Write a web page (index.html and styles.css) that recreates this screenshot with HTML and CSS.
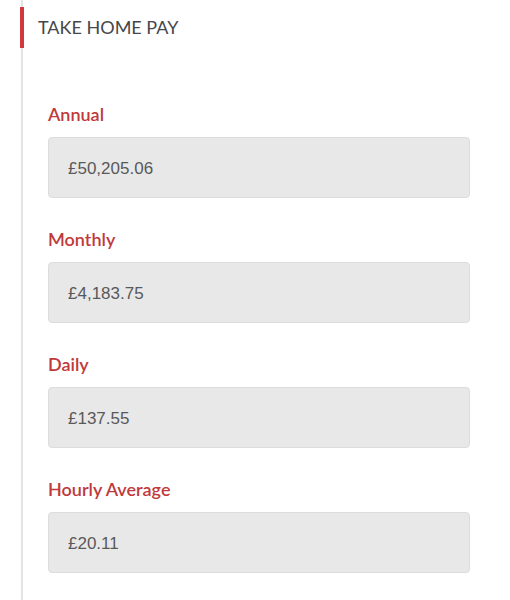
FILE: index.html
```html
<!DOCTYPE html>
<html lang="en">
<head>
    <meta charset="UTF-8">
    <meta name="viewport" content="width=device-width, initial-scale=1.0">
    <title>Take Home Pay</title>
    <link rel="stylesheet" href="styles.css">
</head>
<body>
    <section class="panel">
        <h2 class="panel-title">TAKE HOME PAY</h2>

        <div class="fields">
            <div class="field">
                <label for="annual">Annual</label>
                <div class="value" id="annual">£50,205.06</div>
            </div>
            <div class="field">
                <label for="monthly">Monthly</label>
                <div class="value" id="monthly">£4,183.75</div>
            </div>
            <div class="field">
                <label for="daily">Daily</label>
                <div class="value" id="daily">£137.55</div>
            </div>
            <div class="field">
                <label for="hourly">Hourly Average</label>
                <div class="value" id="hourly">£20.11</div>
            </div>
        </div>
    </section>
</body>
</html>
```

FILE: styles.css
```css
body {
    margin: 0;
    padding: 0;
    background-color: #ffffff;
    font-family: Lato, "Noto Sans", sans-serif;
}

.panel {
    margin-left: 21px;
    border-left: 2px solid #e4e4e4;
    min-height: 100vh;
    padding-top: 7px;
    box-sizing: border-box;
}

.panel-title {
    margin: 0 0 0 -3px;
    padding-left: 14px;
    border-left: 4px solid #d2393a;
    height: 41px;
    line-height: 41px;
    font-size: 18px;
    font-weight: 400;
    color: #45474b;
}

.fields {
    display: flex;
    flex-direction: column;
    gap: 30px;
    padding: 55px 40px 0 25px;
}

.field label {
    display: block;
    margin-bottom: 12px;
    font-size: 18px;
    font-weight: 600;
    color: #c0393b;
}

.value {
    height: 61px;
    box-sizing: border-box;
    padding: 2px 0 0 19px;
    display: flex;
    align-items: center;
    background-color: #e8e8e8;
    border: 1px solid #dcdcdc;
    border-radius: 4px;
    font-family: "Liberation Sans", Arial, sans-serif;
    font-size: 17px;
    color: #595959;
}
```
